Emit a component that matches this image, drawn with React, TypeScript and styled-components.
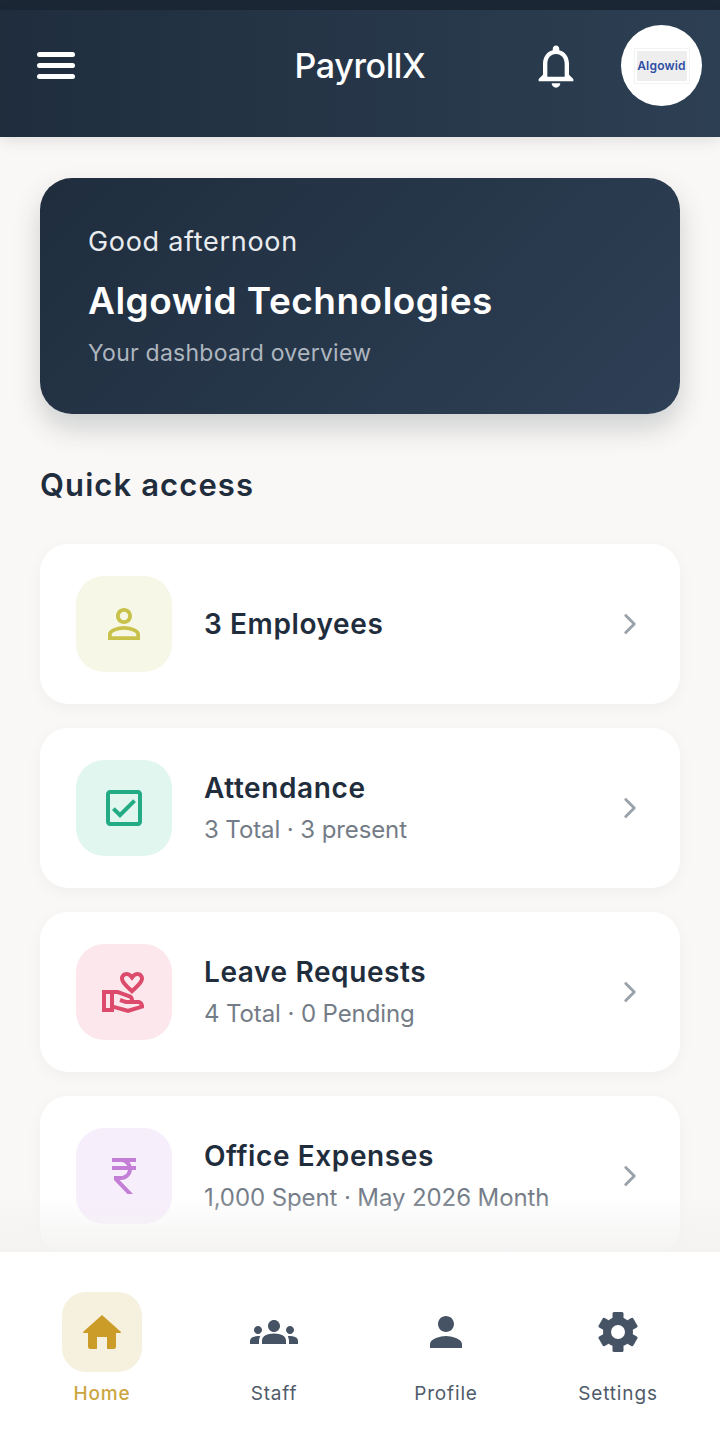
import React from 'react';
import styled, { createGlobalStyle } from 'styled-components';
import { ChevronRight } from 'lucide-react';
import {
  MdOutlineNotifications,
  MdOutlinePersonOutline,
  MdOutlineCheckBox,
  MdOutlineVolunteerActivism,
  MdCurrencyRupee,
  MdGroups,
  MdPerson,
} from 'react-icons/md';

const GlobalStyle = createGlobalStyle`
  html, body {
    margin: 0;
    padding: 0;
    background: #faf8f6;
    font-family: "Inter", "Liberation Sans", sans-serif;
  }
`;

const Screen = styled.div`
  width: 720px;
  height: 1441px;
  display: flex;
  flex-direction: column;
  overflow: hidden;
  background: #faf8f6;
`;

const StatusBar = styled.div`
  height: 10px;
  flex: none;
  background: #1b2735;
`;

const Header = styled.header`
  height: 127px;
  flex: none;
  box-sizing: border-box;
  display: grid;
  grid-template-columns: 1fr auto 1fr;
  align-items: center;
  padding: 0 18px 16px;
  background: linear-gradient(90deg, #1f2d3d, #2d3f53);
  box-shadow: 0 4px 14px rgba(0, 0, 0, 0.1);
  position: relative;
  z-index: 2;
`;

const MenuButton = styled.div`
  width: 38px;
  margin-left: 19px;
  display: flex;
  flex-direction: column;
  gap: 6px;
`;

const MenuLine = styled.span`
  height: 5px;
  border-radius: 3px;
  background: #ffffff;
`;

const Title = styled.h1`
  margin: 0;
  color: #ffffff;
  font-size: 34px;
  font-weight: 500;
  letter-spacing: -0.4px;
`;

const HeaderRight = styled.div`
  display: flex;
  align-items: center;
  justify-content: flex-end;
  gap: 39px;
  color: #ffffff;
`;

const Avatar = styled.div`
  width: 81px;
  height: 81px;
  border-radius: 50%;
  background: #ffffff;
  display: flex;
  align-items: center;
  justify-content: center;
`;

const LogoBox = styled.div`
  width: 50px;
  height: 30px;
  background: #eeeeee;
  outline: 1px solid #f3f3f3;
  outline-offset: 2px;
  display: flex;
  align-items: center;
  justify-content: center;
  color: #2f4fa5;
  font-size: 12px;
  font-weight: 600;
  letter-spacing: 0.2px;
`;

const Main = styled.main`
  flex: 1;
  min-height: 0;
  padding: 41px 40px 0;
  position: relative;
  overflow: hidden;
`;

const Hero = styled.section`
  height: 236px;
  box-sizing: border-box;
  padding: 0 48px;
  display: flex;
  flex-direction: column;
  justify-content: center;
  border-radius: 32px;
  background: linear-gradient(135deg, #1f2d3d, #2e4056);
  box-shadow: 0 14px 28px rgba(31, 45, 61, 0.2);
`;

const Greeting = styled.div`
  color: #e9ecef;
  font-size: 27px;
  line-height: 34px;
  letter-spacing: 0.7px;
`;

const Company = styled.div`
  color: #ffffff;
  font-size: 37px;
  font-weight: 600;
  line-height: 48px;
  margin-top: 18px;
  letter-spacing: 0.5px;
`;

const HeroNote = styled.div`
  color: #aeb6bf;
  font-size: 23px;
  line-height: 30px;
  margin-top: 13px;
  letter-spacing: 0.25px;
`;

const SectionTitle = styled.h2`
  margin: 52px 0 40px;
  height: 38px;
  line-height: 38px;
  color: #1f2d3d;
  font-size: 31px;
  font-weight: 600;
  letter-spacing: 1.1px;
`;

const CardList = styled.div`
  display: flex;
  flex-direction: column;
  gap: 24px;
`;

const Card = styled.div`
  height: 160px;
  flex: none;
  box-sizing: border-box;
  padding: 0 36px;
  display: flex;
  align-items: center;
  background: #ffffff;
  border-radius: 28px;
  box-shadow: 0 4px 16px rgba(0, 0, 0, 0.04);
`;

const IconTile = styled.div<{ $bg: string; $fg: string }>`
  width: 96px;
  height: 96px;
  flex: none;
  border-radius: 28px;
  display: flex;
  align-items: center;
  justify-content: center;
  background: ${(p) => p.$bg};
  color: ${(p) => p.$fg};
`;

const CardText = styled.div`
  flex: 1;
  margin-left: 32px;
`;

const CardTitle = styled.div`
  color: #1f2d3d;
  font-size: 28px;
  font-weight: 600;
  line-height: 36px;
  letter-spacing: 0.6px;
`;

const CardNote = styled.div`
  color: #747c87;
  font-size: 24px;
  line-height: 32px;
  margin-top: 8px;
  letter-spacing: -0.1px;
`;

const Chevron = styled(ChevronRight)`
  color: #9aa1a9;
  flex: none;
  margin-right: -3px;
`;

const Fade = styled.div`
  position: absolute;
  left: 0;
  right: 0;
  bottom: 0;
  height: 56px;
  background: linear-gradient(rgba(245, 244, 243, 0), rgba(243, 242, 241, 0.9));
`;

const BottomNav = styled.nav`
  height: 189px;
  flex: none;
  display: grid;
  grid-template-columns: repeat(4, 172px);
  justify-content: center;
  padding-top: 40px;
  box-sizing: border-box;
  background: #ffffff;
  position: relative;
`;

const NavItem = styled.div`
  display: flex;
  flex-direction: column;
  align-items: center;
`;

const NavIcon = styled.div<{ $active?: boolean }>`
  width: 80px;
  height: 80px;
  border-radius: 24px;
  display: flex;
  align-items: center;
  justify-content: center;
  background: ${(p) => (p.$active ? '#f6f0df' : 'transparent')};
  color: ${(p) => (p.$active ? '#cc9c28' : '#465364')};
`;

const NavLabel = styled.span<{ $active?: boolean }>`
  margin-top: 9px;
  font-size: 19px;
  line-height: 26px;
  font-weight: ${(p) => (p.$active ? 500 : 400)};
  color: ${(p) => (p.$active ? '#cca63f' : '#505b6a')};
  letter-spacing: 0.85px;
`;

const HomeIcon = () => (
  <svg width="38" height="34" viewBox="0 0 38 34" fill="currentColor">
    <path d="M19 0 L37.500 16.500 Q38.500 18 37 18 H33 V31.500 Q33 34 30.500 34 H24 V22 H14 V34 H7.500 Q5 34 5 31.500 V18 H1 Q-.5 18 .5 16.500 Z" />
  </svg>
);

// chunky six-tooth gear, the icon set's one is too thin
const GearIcon = () => (
  <svg width="40" height="40" viewBox="0 0 40 40" fill="currentColor">
    <circle cx="20" cy="20" r="11" fill="none" stroke="currentColor" strokeWidth="8" />
    {[0, 60, 120, 180, 240, 300].map((deg) => (
      <rect key={deg} x="14.500" y="0" width="11" height="7" rx="1.500" transform={`rotate(${deg} 20 20)`} />
    ))}
  </svg>
);

const items = [
  { title: '3 Employees', bg: '#f6f7e6', fg: '#c9c24a', icon: <MdOutlinePersonOutline size={48} /> },
  { title: 'Attendance', note: '3 Total · 3 present', bg: '#e2f6f0', fg: '#22ab84', icon: <MdOutlineCheckBox size={48} /> },
  { title: 'Leave Requests', note: '4 Total · 0 Pending', bg: '#fce8ec', fg: '#dc4a6c', icon: <MdOutlineVolunteerActivism size={48} /> },
  { title: 'Office Expenses', note: '1,000 Spent · May 2026 Month', bg: '#f7eefc', fg: '#c37fd6', icon: <MdCurrencyRupee size={48} /> },
];

const navItems = [
  { label: 'Home', active: true, icon: <HomeIcon /> },
  { label: 'Staff', icon: <MdGroups size={48} /> },
  { label: 'Profile', icon: <MdPerson size={48} /> },
  { label: 'Settings', icon: <GearIcon /> },
];

const App: React.FC = () => {
  return (
    <Screen>
      <GlobalStyle />
      <StatusBar />
      <Header>
        <MenuButton>
          <MenuLine />
          <MenuLine />
          <MenuLine />
        </MenuButton>
        <Title>PayrollX</Title>
        <HeaderRight>
          <MdOutlineNotifications size={52} />
          <Avatar>
            <LogoBox>Algowid</LogoBox>
          </Avatar>
        </HeaderRight>
      </Header>
      <Main>
        <Hero>
          <Greeting>Good afternoon</Greeting>
          <Company>Algowid Technologies</Company>
          <HeroNote>Your dashboard overview</HeroNote>
        </Hero>
        <SectionTitle>Quick access</SectionTitle>
        <CardList>
          {items.map((item) => (
            <Card key={item.title}>
              <IconTile $bg={item.bg} $fg={item.fg}>{item.icon}</IconTile>
              <CardText>
                <CardTitle>{item.title}</CardTitle>
                {item.note && <CardNote>{item.note}</CardNote>}
              </CardText>
              <Chevron size={34} strokeWidth={2} />
            </Card>
          ))}
        </CardList>
        <Fade />
      </Main>
      <BottomNav>
        {navItems.map((nav) => (
          <NavItem key={nav.label}>
            <NavIcon $active={nav.active}>{nav.icon}</NavIcon>
            <NavLabel $active={nav.active}>{nav.label}</NavLabel>
          </NavItem>
        ))}
      </BottomNav>
    </Screen>
  );
};

export default App;
